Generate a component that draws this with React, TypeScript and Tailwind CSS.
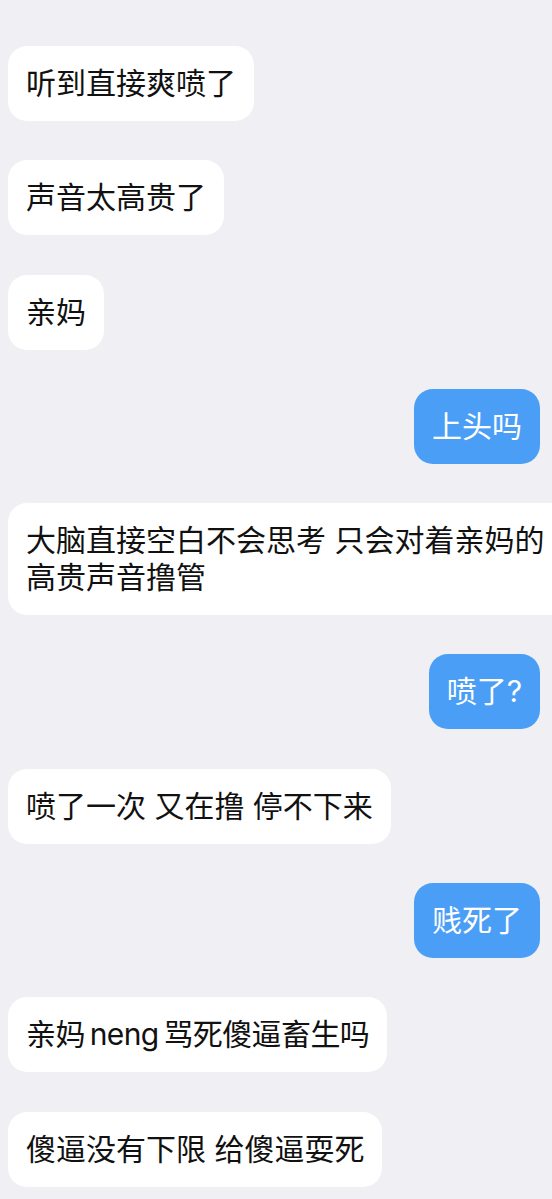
type Msg = { text: string; me?: boolean; wide?: boolean; tight?: boolean };

const messages: Msg[] = [
  { text: '听到直接爽喷了' },
  { text: '声音太高贵了' },
  { text: '亲妈' },
  { text: '上头吗', me: true },
  { text: '大脑直接空白不会思考 只会对着亲妈的\n高贵声音撸管', wide: true },
  { text: '喷了?', me: true },
  { text: '喷了一次 又在撸 停不下来' },
  { text: '贱死了', me: true },
  { text: '亲妈 neng 骂死傻逼畜生吗', tight: true },
  { text: '傻逼没有下限 给傻逼耍死' },
];

function Bubble({ msg }: { msg: Msg }) {
  const lines = msg.text.split('\n');
  return (
    <div className={msg.me ? 'flex justify-end pr-[12px]' : 'flex justify-start pl-[8px]'}>
      <div
        className={
          (msg.me ? 'bg-[#4b9ef6] text-white' : 'bg-white text-[#111111]') +
          (msg.wide ? ' w-[580px] shrink-0' : '') +
          (msg.tight ? ' tracking-[-0.6px] [word-spacing:-3px]' : '') +
          ' rounded-[19px] px-[18px] py-[19px] text-[30px] leading-[37px] whitespace-nowrap'
        }
      >
        {lines.map((l, i) => (
          <div key={i}>{l}</div>
        ))}
      </div>
    </div>
  );
}

export default function App() {
  return (
    <div
      className="w-[552px] h-[1199px] overflow-hidden bg-[#efeff4] pt-[46px]"
      style={{ fontFamily: 'Inter, "Noto Sans CJK SC", sans-serif' }}
    >
      <div className="flex flex-col gap-[39.3px]">
        {messages.map((m, i) => (
          <Bubble key={i} msg={m} />
        ))}
      </div>
    </div>
  );
}
